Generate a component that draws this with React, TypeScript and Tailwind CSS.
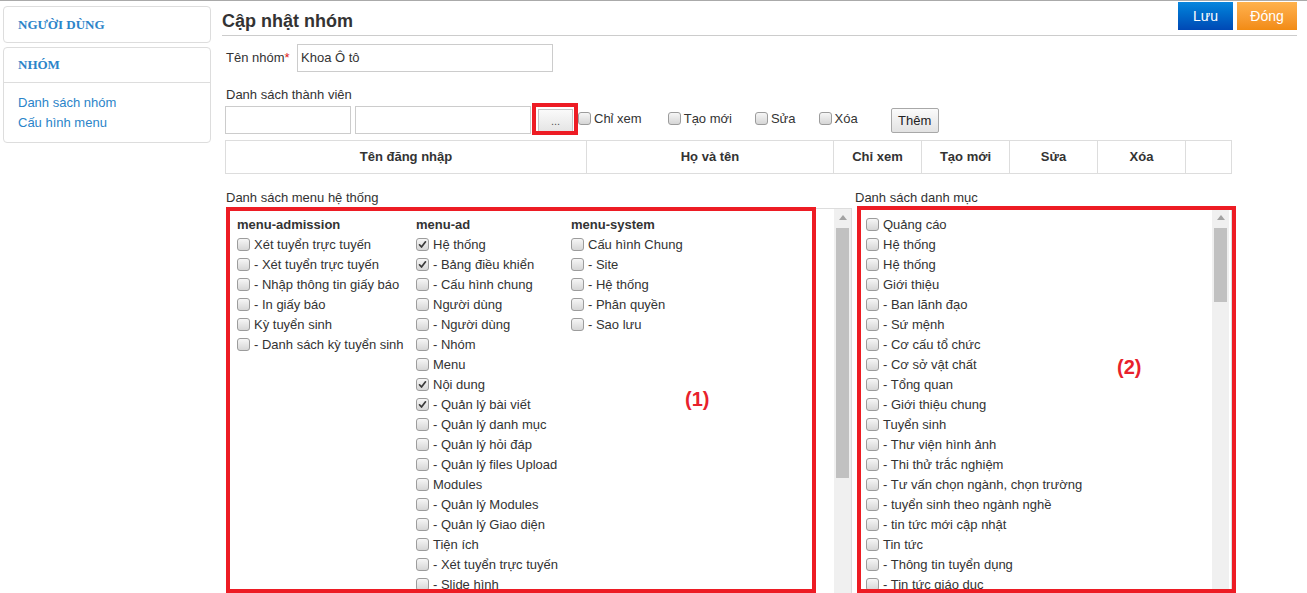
import React from "react";

const Cb = ({ checked }: { checked?: boolean }) => (
  <span className="inline-flex w-[13px] h-[13px] shrink-0 rounded-[3px] border border-[#9c9c9c] bg-linear-to-b from-[#f6f6f6] to-[#d6d6d6] items-center justify-center mt-[3px]">
    {checked && (
      <svg width="9" height="9" viewBox="0 0 9 9">
        <path d="M1.5 4.8 L3.5 7 L7.5 1.8" stroke="#3a3a3a" strokeWidth="1.7" fill="none" strokeLinecap="round" strokeLinejoin="round" />
      </svg>
    )}
  </span>
);

const Item = ({ label, checked }: { label: string; checked?: boolean }) => (
  <div className="flex items-start gap-[4px] h-[20px] leading-[20px] whitespace-nowrap">
    <Cb checked={checked} />
    <span>{label}</span>
  </div>
);

const col1 = ["Xét tuyển trực tuyến", "- Xét tuyển trực tuyến", "- Nhập thông tin giấy báo", "- In giấy báo", "Kỳ tuyển sinh", "- Danh sách kỳ tuyển sinh"];
const col2: [string, boolean][] = [
  ["Hệ thống", true],
  ["- Bảng điều khiển", true],
  ["- Cấu hình chung", false],
  ["Người dùng", false],
  ["- Người dùng", false],
  ["- Nhóm", false],
  ["Menu", false],
  ["Nội dung", true],
  ["- Quản lý bài viết", true],
  ["- Quản lý danh mục", false],
  ["- Quản lý hỏi đáp", false],
  ["- Quản lý files Upload", false],
  ["Modules", false],
  ["- Quản lý Modules", false],
  ["- Quản lý Giao diện", false],
  ["Tiện ích", false],
  ["- Xét tuyển trực tuyến", false],
  ["- Slide hình", false],
  ["- Quảng cáo", false],
];
const col3 = ["Cấu hình Chung", "- Site", "- Hệ thống", "- Phân quyền", "- Sao lưu"];
const right = [
  "Quảng cáo",
  "Hệ thống",
  "Hệ thống",
  "Giới thiệu",
  "- Ban lãnh đạo",
  "- Sứ mệnh",
  "- Cơ cấu tổ chức",
  "- Cơ sở vật chất",
  "- Tổng quan",
  "- Giới thiệu chung",
  "Tuyển sinh",
  "- Thư viện hình ảnh",
  "- Thi thử trắc nghiệm",
  "- Tư vấn chọn ngành, chọn trường",
  "- tuyển sinh theo ngành nghề",
  "- tin tức mới cập nhật",
  "Tin tức",
  "- Thông tin tuyển dụng",
  "- Tin tức giáo dục",
  "- Hoạt động",
];

const ScrollBar = ({ thumb }: { thumb: number }) => (
  <div className="w-[17px] shrink-0 bg-[#f0f0f0] flex flex-col items-center">
    <div className="h-[17px] w-full flex items-center justify-center">
      <svg width="8" height="5" viewBox="0 0 8 5">
        <path d="M0 5 L4 0 L8 5 Z" fill="#a3a3a3" />
      </svg>
    </div>
    <div className="w-[13px] bg-[#c1c1c1] mt-[2px]" style={{ height: thumb }} />
  </div>
);

export default function App() {
  return (
    <div
      className="w-[1307px] h-[593px] overflow-hidden bg-white text-[13px] text-[#333]"
      style={{ fontFamily: '"Liberation Sans", Arial, sans-serif' }}
    >
      <div className="border-t border-[#aaa] flex">
        {/* Sidebar */}
        <div className="ml-[3px] mt-[5px] w-[208px] flex flex-col gap-[4px] shrink-0">
          <div className="h-[37px] border border-[#ddd] rounded-[4px] flex items-center pl-[14px]">
            <span className="font-bold text-[13px] text-[#2b84c9]" style={{ fontFamily: '"Liberation Serif", serif' }}>
              NGƯỜI DÙNG
            </span>
          </div>
          <div className="border border-[#ddd] rounded-[4px]">
            <div className="h-[35px] border-b border-[#ddd] flex items-center pl-[14px]">
              <span className="font-bold text-[13px] text-[#2b84c9]" style={{ fontFamily: '"Liberation Serif", serif' }}>
                NHÓM
              </span>
            </div>
            <div className="pl-[14px] pt-[10px] pb-[9px] text-[#2b84c9] leading-[20px]">
              <div>Danh sách nhóm</div>
              <div>Cấu hình menu</div>
            </div>
          </div>
        </div>

        {/* Main */}
        <div className="ml-[11px] w-[1075px] shrink-0">
          <div className="h-[35px] border-b border-[#ccc] flex justify-between items-start">
            <h1 className="text-[18px] font-bold leading-[22px] mt-[9px] text-[#333]">Cập nhật nhóm</h1>
            <div className="flex gap-[4px] mt-[1px]">
              <button className="w-[55px] h-[28px] bg-linear-to-b from-[#0a86dd] to-[#0048b4] text-white text-[14px]">Lưu</button>
              <button className="w-[60px] h-[28px] bg-linear-to-b from-[#ffb24c] to-[#f28b12] text-white text-[14px]">Đóng</button>
            </div>
          </div>

          <div className="pl-[3px]">
            {/* Tên nhóm */}
            <div className="flex items-center mt-[8px] h-[28px]">
              <span className="pl-[1px] w-[72px]">
                Tên nhóm<span className="text-[#e02020]">*</span>
              </span>
              <div className="w-[256px] h-[28px] border border-[#ccc] flex items-center pl-[3px]">Khoa Ô tô</div>
            </div>

            <div className="mt-[13px] h-[21px] leading-[20px] pl-[1px]">Danh sách thành viên</div>

            {/* member row */}
            <div className="flex items-start h-[28px]">
              <div className="w-[126px] h-[28px] border border-[#ccc]" />
              <div className="w-[176px] h-[28px] border border-[#ccc] ml-[4px]" />
              <div className="relative ml-[7px] mt-[3px]">
                <button className="w-[35px] h-[24px] border border-[#c4c4c4] bg-linear-to-b from-[#fafafa] to-[#e4e4e4] text-[11px] leading-[20px] text-[#555]">
                  ...
                </button>
                <div className="absolute left-[-6px] top-[-6px] w-[46px] h-[32px] border-[4px] border-[#ed1c24]" />
              </div>
              <div className="flex items-start ml-[5px] mt-[3px] gap-[3px]">
                <Cb />
                <span className="leading-[20px]">Chỉ xem</span>
              </div>
              <div className="flex items-start ml-[26px] mt-[3px] gap-[3px]">
                <Cb />
                <span className="leading-[20px]">Tạo mới</span>
              </div>
              <div className="flex items-start ml-[23px] mt-[3px] gap-[3px]">
                <Cb />
                <span className="leading-[20px]">Sửa</span>
              </div>
              <div className="flex items-start ml-[23px] mt-[3px] gap-[3px]">
                <Cb />
                <span className="leading-[20px]">Xóa</span>
              </div>
              <button className="ml-[33px] mt-[2px] w-[48px] h-[25px] border border-[#a8a8a8] rounded-[2px] bg-linear-to-b from-[#fbfbfb] to-[#e2e2e2] text-[13px] text-[#222]">
                Thêm
              </button>
            </div>

            {/* table */}
            <div className="mt-[6px] w-[1007px] h-[34px] border border-[#ddd] flex font-bold text-[13px]">
              <div className="w-[361px] border-r border-[#ddd] flex items-center justify-center">Tên đăng nhập</div>
              <div className="w-[247px] border-r border-[#ddd] flex items-center justify-center">Họ và tên</div>
              <div className="w-[88px] border-r border-[#ddd] flex items-center justify-center">Chỉ xem</div>
              <div className="w-[88px] border-r border-[#ddd] flex items-center justify-center">Tạo mới</div>
              <div className="w-[88px] border-r border-[#ddd] flex items-center justify-center">Sửa</div>
              <div className="w-[88px] border-r border-[#ddd] flex items-center justify-center">Xóa</div>
              <div className="flex-1" />
            </div>

            {/* lists */}
            <div className="flex gap-[5px] mt-[14px] pl-[1px]">
              <div className="w-[626px]">
                <div className="h-[20px] leading-[20px]">Danh sách menu hệ thống</div>
                <div className="relative h-[400px] border border-[#ddd] flex">
                  <div className="flex-1 flex pl-[10px] pt-[6px] overflow-hidden">
                    <div className="w-[179px]">
                      <div className="font-bold h-[20px] leading-[20px]">menu-admission</div>
                      {col1.map((t, i) => (
                        <Item key={i} label={t} />
                      ))}
                    </div>
                    <div className="w-[155px]">
                      <div className="font-bold h-[20px] leading-[20px]">menu-ad</div>
                      {col2.map(([t, c], i) => (
                        <Item key={i} label={t} checked={c} />
                      ))}
                    </div>
                    <div>
                      <div className="font-bold h-[20px] leading-[20px]">menu-system</div>
                      {col3.map((t, i) => (
                        <Item key={i} label={t} />
                      ))}
                    </div>
                  </div>
                  <ScrollBar thumb={250} />
                  <div className="absolute left-[-1px] top-[-2px] w-[590px] h-[386px] border-[4px] border-[#ed1c24]" />
                  <div className="absolute left-[458px] top-[178px] text-[20px] font-bold text-[#e8212c] leading-[24px]">(1)</div>
                </div>
              </div>
              <div className="w-[375px]">
                <div className="h-[20px] leading-[20px] -ml-[2px]">Danh sách danh mục</div>
                <div className="relative h-[400px] border border-[#ddd] flex">
                  <div className="flex-1 pl-[8px] pt-[6px] overflow-hidden">
                    {right.map((t, i) => (
                      <Item key={i} label={t} />
                    ))}
                  </div>
                  <div className="mr-[2px] flex">
                    <ScrollBar thumb={74} />
                  </div>
                  <div className="absolute left-[-1px] top-[-3px] w-[379px] h-[387px] border-[4px] border-[#ed1c24]" />
                  <div className="absolute left-[259px] top-[146px] text-[20px] font-bold text-[#e8212c] leading-[24px]">(2)</div>
                </div>
              </div>
            </div>
          </div>
        </div>
      </div>
    </div>
  );
}
